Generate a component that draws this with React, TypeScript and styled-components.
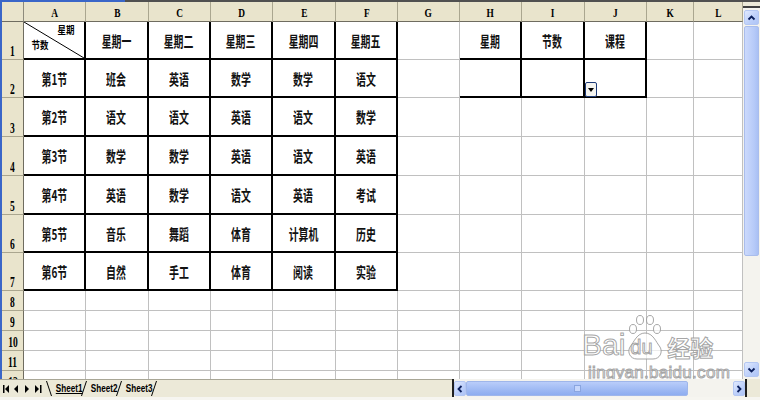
import React from "react";
import styled, { createGlobalStyle } from "styled-components";

const GlobalStyle = createGlobalStyle`
  html, body { margin: 0; padding: 0; background: #fff; }
  body { font-family: "Noto Sans CJK SC", sans-serif; }
`;

const Window = styled.div`
  width: 760px;
  height: 400px;
  display: flex;
  flex-direction: column;
  overflow: hidden;
  background: #fff;
`;

const TopStrip = styled.div`
  flex: none;
  height: 2px;
  background: linear-gradient(to right, #3a66c8 0 125px, #505050 125px);
`;

const Middle = styled.div`
  flex: none;
  height: 377px;
  display: flex;
`;

const SheetArea = styled.div`
  position: relative;
  flex: 1;
  overflow: hidden;
  border-left: 2px solid #3a66c8;
`;

const Grid = styled.div`
  display: grid;
  grid-template-columns: 22px 62px 63px 62px 62px 63px 62px 62px 62px 63px 62px 47px 49px;
  grid-template-rows: 20px 38px 38px 39px 39px 39px 38px 38px repeat(5, 20px);
`;

const Corner = styled.div`
  box-sizing: border-box;
  background: #e9e4cc;
  border-right: 1px solid #8e8b7c;
  border-bottom: 1px solid #6f6c60;
`;

const ColHeader = styled.div`
  box-sizing: border-box;
  background: #e9e4cc;
  border-right: 1px solid #aaa68f;
  border-bottom: 1px solid #6f6c60;
  display: flex;
  align-items: center;
  justify-content: center;
  padding-top: 1px;
`;

const HeadText = styled.span`
  display: inline-block;
  font-family: "Liberation Serif", serif;
  font-weight: 700;
  font-size: 13px;
  line-height: 1;
  transform: scaleX(0.72);
  color: #000;
`;

const RowHeader = styled.div`
  box-sizing: border-box;
  background: #e9e4cc;
  border-right: 1px solid #6f6c60;
  border-bottom: 1px solid #aaa68f;
  display: flex;
  align-items: flex-end;
  justify-content: center;
`;

const RowNum = styled.span`
  display: inline-block;
  font-family: "Liberation Serif", serif;
  font-weight: 700;
  font-size: 14px;
  line-height: 14px;
  transform: scaleX(0.68);
  color: #000;
`;

const Cell = styled.div<{ $tr?: boolean; $tb?: boolean }>`
  position: relative;
  box-sizing: border-box;
  background: #fff;
  border-right: ${(p) => (p.$tr ? "2px solid #000" : "1px solid #c0c0c0")};
  border-bottom: ${(p) => (p.$tb ? "2px solid #000" : "1px solid #c0c0c0")};
  display: flex;
  align-items: center;
  justify-content: center;
`;

const CellText = styled.span`
  display: inline-block;
  font-family: "Noto Sans CJK SC", sans-serif;
  font-weight: 700;
  font-size: 15px;
  line-height: 1;
  white-space: nowrap;
  transform: scaleX(0.66);
  color: #111;
`;

const DiagCell = styled(Cell)`
  flex-direction: column;
  align-items: stretch;
  justify-content: space-between;
  padding: 3px 8px 8px 6px;
`;

const DiagLine = styled.svg`
  position: absolute;
  left: 0;
  top: 0;
  width: 100%;
  height: 100%;
`;

const SmallText = styled.span<{ $end?: boolean }>`
  align-self: ${(p) => (p.$end ? "flex-end" : "flex-start")};
  font-family: "Noto Sans CJK SC", sans-serif;
  font-weight: 700;
  font-size: 10px;
  line-height: 1;
  transform: scaleX(0.85);
  color: #000;
`;

const DropBtn = styled.div`
  position: absolute;
  left: 0;
  bottom: -1px;
  width: 12px;
  height: 15px;
  box-sizing: border-box;
  border: 1px solid #1d3a78;
  border-radius: 2px;
  background: #f4f4f0;
  display: flex;
  align-items: center;
  justify-content: center;
`;

const VScroll = styled.div`
  flex: none;
  width: 17px;
  display: flex;
  flex-direction: column;
  align-items: center;
  background: #f4f3ee;
`;

const SplitBox = styled.div`
  flex: none;
  width: 100%;
  height: 4px;
  background: #ece9d8;
  border-bottom: 2px solid #404040;
`;

const ScrollBtn = styled.div<{ $w?: number; $h?: number }>`
  flex: none;
  width: ${(p) => p.$w ?? 15}px;
  height: ${(p) => p.$h ?? 15}px;
  box-sizing: border-box;
  border: 1px solid #b4c7f2;
  border-radius: 2px;
  background: linear-gradient(135deg, #e0e9fe 0%, #bccffa 60%, #aec4f6 100%);
  display: flex;
  align-items: center;
  justify-content: center;
`;

const VThumb = styled.div`
  flex: none;
  width: 15px;
  height: 230px;
  margin-top: 1px;
  box-sizing: border-box;
  border: 1px solid #a9bdec;
  border-radius: 2px;
  background: linear-gradient(to right, #cbd9fc, #b6caf8 70%, #a9c0f4);
`;

const Track = styled.div`
  flex: 1;
`;

const BottomBar = styled.div`
  flex: none;
  height: 18px;
  display: flex;
  background: #ece9d8;
`;

const TabArea = styled.div`
  flex: none;
  width: 452px;
  display: flex;
  align-items: center;
  box-sizing: border-box;
  border-top: 1px solid #a8a696;
  padding-left: 3px;
`;

const NavIcons = styled.svg`
  flex: none;
  width: 40px;
  height: 10px;
  margin-right: 3px;
`;

const TabSlash = styled.svg`
  flex: none;
  width: 6px;
  height: 17px;
`;

const TabLabel = styled.span<{ $active?: boolean }>`
  flex: none;
  width: 29px;
  text-align: center;
  font-family: "Liberation Sans", sans-serif;
  font-weight: 700;
  font-size: 11px;
  line-height: 1;
  white-space: nowrap;
  transform: scaleX(0.74);
  text-decoration: ${(p) => (p.$active ? "underline" : "none")};
  color: #000;
`;

const Splitter = styled.div`
  flex: none;
  width: 2px;
  background: #202020;
`;

const HScroll = styled.div`
  flex: none;
  width: 291px;
  display: flex;
  align-items: flex-end;
  padding-bottom: 1px;
  box-sizing: border-box;
  background: #f4f3ee;
`;

const HThumb = styled.div`
  flex: none;
  width: 222px;
  height: 15px;
  box-sizing: border-box;
  border: 1px solid #9fb6ea;
  border-radius: 2px;
  background: linear-gradient(to bottom, #b9cdfa, #9ab6f2 70%, #8eadf0);
  display: flex;
  align-items: center;
  justify-content: center;
`;

const Grip = styled.div`
  width: 7px;
  height: 7px;
  box-sizing: border-box;
  border: 1px solid #8aa5e0;
  background: #c6d6fb;
`;

const HTrack = styled.div`
  flex: 1;
`;

const CornerBox = styled.div`
  flex: 1;
  background: #ece9d8;
`;

const Footer = styled.div`
  flex: none;
  height: 3px;
  background: #f6f5f0;
`;

const Watermark = styled.div`
  position: absolute;
  left: 580px;
  top: 312px;
  display: flex;
  flex-direction: column;
  align-items: flex-start;
  pointer-events: none;
`;

const WmRow = styled.div`
  display: flex;
  align-items: flex-end;
  height: 46px;
`;

const WmText = styled.span<{ $size: number; $cjk?: boolean }>`
  font-family: ${(p) => (p.$cjk ? '"Noto Sans CJK SC", sans-serif' : '"Liberation Sans", sans-serif')};
  font-weight: ${(p) => (p.$cjk ? 700 : 400)};
  font-size: ${(p) => p.$size}px;
  line-height: 1;
  color: rgba(255, 255, 255, 0.8);
  -webkit-text-stroke: 1px rgba(150, 150, 150, 0.85);
  white-space: nowrap;
`;

const CjkMark = styled(WmText)`
  line-height: 0.9;
  margin-bottom: 2px;
`;

const PawBlock = styled.div`
  position: relative;
  width: 36px;
  height: 46px;
  margin: 0 4px 0 2px;
`;

const PawSvg = styled.svg`
  position: absolute;
  left: 0;
  top: 0;
  width: 36px;
  height: 46px;
`;

const PawText = styled(WmText)`
  position: absolute;
  left: 3px;
  bottom: 3px;
`;

const WmUrl = styled(WmText)`
  margin-left: 6px;
  margin-top: 4px;
  letter-spacing: 0.3px;
`;

const COLS = ["A", "B", "C", "D", "E", "F", "G", "H", "I", "J", "K", "L"];
const HEAD_ROW = ["", "星期一", "星期二", "星期三", "星期四", "星期五", "", "星期", "节数", "课程", "", ""];
const BODY = [
  ["第1节", "班会", "英语", "数学", "数学", "语文"],
  ["第2节", "语文", "语文", "英语", "语文", "数学"],
  ["第3节", "数学", "数学", "英语", "语文", "英语"],
  ["第4节", "英语", "数学", "语文", "英语", "考试"],
  ["第5节", "音乐", "舞蹈", "体育", "计算机", "历史"],
  ["第6节", "自然", "手工", "体育", "阅读", "实验"],
];

const isThick = (r: number, c: number) =>
  (r >= 1 && r <= 7 && c <= 5) || (r >= 1 && r <= 2 && c >= 7 && c <= 9);

const cellText = (r: number, c: number): string => {
  if (r === 1) return HEAD_ROW[c];
  if (r >= 2 && r <= 7 && c <= 5) return BODY[r - 2][c];
  return "";
};

const Arrow = ({ dir }: { dir: "up" | "down" | "left" | "right" }) => {
  const paths: Record<string, string> = {
    up: "M1.5 5.5 L4.5 2.5 L7.5 5.5",
    down: "M1.5 2.5 L4.5 5.5 L7.5 2.5",
    left: "M5.5 1 L2.5 4 L5.5 7",
    right: "M2.5 1 L5.5 4 L2.5 7",
  };
  return (
    <svg width="9" height="8" viewBox="0 0 9 8">
      <path d={paths[dir]} fill="none" stroke="#0b1f5c" strokeWidth="1.8" />
    </svg>
  );
};

const Slash = ({ back }: { back?: boolean }) => (
  <TabSlash viewBox="0 0 6 17">
    {back ? (
      <line x1="0.5" y1="1" x2="5.5" y2="16" stroke="#000" strokeWidth="1" />
    ) : (
      <line x1="0.5" y1="16" x2="5.5" y2="1" stroke="#000" strokeWidth="1" />
    )}
  </TabSlash>
);

export default function App() {
  const rows: React.ReactNode[] = [];
  for (let r = 1; r <= 12; r++) {
    rows.push(
      <RowHeader key={`rh${r}`}>
        <RowNum>{r}</RowNum>
      </RowHeader>
    );
    for (let c = 0; c < 12; c++) {
      const thick = isThick(r, c);
      const key = `c${r}-${c}`;
      if (r === 1 && c === 0) {
        rows.push(
          <DiagCell key={key} $tr $tb>
            <DiagLine viewBox="0 0 60 36" preserveAspectRatio="none">
              <line x1="0" y1="0" x2="60" y2="36" stroke="#000" strokeWidth="1" />
            </DiagLine>
            <SmallText $end>星期</SmallText>
            <SmallText>节数</SmallText>
          </DiagCell>
        );
        continue;
      }
      const t = cellText(r, c);
      rows.push(
        <Cell key={key} $tr={thick} $tb={thick}>
          {t && <CellText>{t}</CellText>}
          {r === 2 && c === 9 && (
            <DropBtn>
              <svg width="6" height="4" viewBox="0 0 6 4">
                <path d="M0 0 L6 0 L3 4 Z" fill="#000" />
              </svg>
            </DropBtn>
          )}
        </Cell>
      );
    }
  }

  return (
    <>
      <GlobalStyle />
      <Window>
        <TopStrip />
        <Middle>
          <SheetArea>
            <Grid>
              <Corner />
              {COLS.map((c) => (
                <ColHeader key={c}>
                  <HeadText>{c}</HeadText>
                </ColHeader>
              ))}
              {rows}
            </Grid>
            <Watermark>
              <WmRow>
                <WmText $size={30}>Bai</WmText>
                <PawBlock>
                  <PawSvg viewBox="0 0 36 46">
                    <g fill="rgba(255,255,255,0.7)" stroke="rgba(150,150,150,0.85)" strokeWidth="1">
                      <ellipse cx="6" cy="15" rx="3.5" ry="4.5" />
                      <ellipse cx="13" cy="6" rx="3.5" ry="4.5" />
                      <ellipse cx="23" cy="6" rx="3.5" ry="4.5" />
                      <ellipse cx="30" cy="15" rx="3.5" ry="4.5" />
                      <path d="M18 19 C10 19 7 28 3 33 C0 38 3 45 10 45 L26 45 C33 45 36 38 33 33 C29 28 26 19 18 19 Z" />
                    </g>
                  </PawSvg>
                  <PawText $size={20}>du</PawText>
                </PawBlock>
                <CjkMark $size={23} $cjk>
                  经验
                </CjkMark>
              </WmRow>
              <WmUrl $size={17}>jingyan.baidu.com</WmUrl>
            </Watermark>
          </SheetArea>
          <VScroll>
            <SplitBox />
            <ScrollBtn style={{ marginTop: 2 }}>
              <Arrow dir="up" />
            </ScrollBtn>
            <VThumb />
            <Track />
            <ScrollBtn style={{ marginBottom: 2 }}>
              <Arrow dir="down" />
            </ScrollBtn>
          </VScroll>
        </Middle>
        <BottomBar>
          <TabArea>
            <NavIcons viewBox="0 0 40 10">
              <g fill="#000">
                <rect x="0" y="1" width="1.5" height="8" />
                <path d="M6 1 L2 5 L6 9 Z" />
                <path d="M15 1 L11 5 L15 9 Z" />
                <path d="M22 1 L26 5 L22 9 Z" />
                <path d="M32 1 L36 5 L32 9 Z" />
                <rect x="37" y="1" width="1.5" height="8" />
              </g>
            </NavIcons>
            <Slash back />
            <TabLabel $active>Sheet1</TabLabel>
            <Slash />
            <TabLabel>Sheet2</TabLabel>
            <Slash />
            <TabLabel>Sheet3</TabLabel>
            <Slash />
          </TabArea>
          <Splitter />
          <HScroll>
            <ScrollBtn $w={12}>
              <Arrow dir="left" />
            </ScrollBtn>
            <HThumb>
              <Grip />
            </HThumb>
            <HTrack />
            <ScrollBtn $w={12}>
              <Arrow dir="right" />
            </ScrollBtn>
          </HScroll>
          <Splitter />
          <CornerBox />
        </BottomBar>
        <Footer />
      </Window>
    </>
  );
}
